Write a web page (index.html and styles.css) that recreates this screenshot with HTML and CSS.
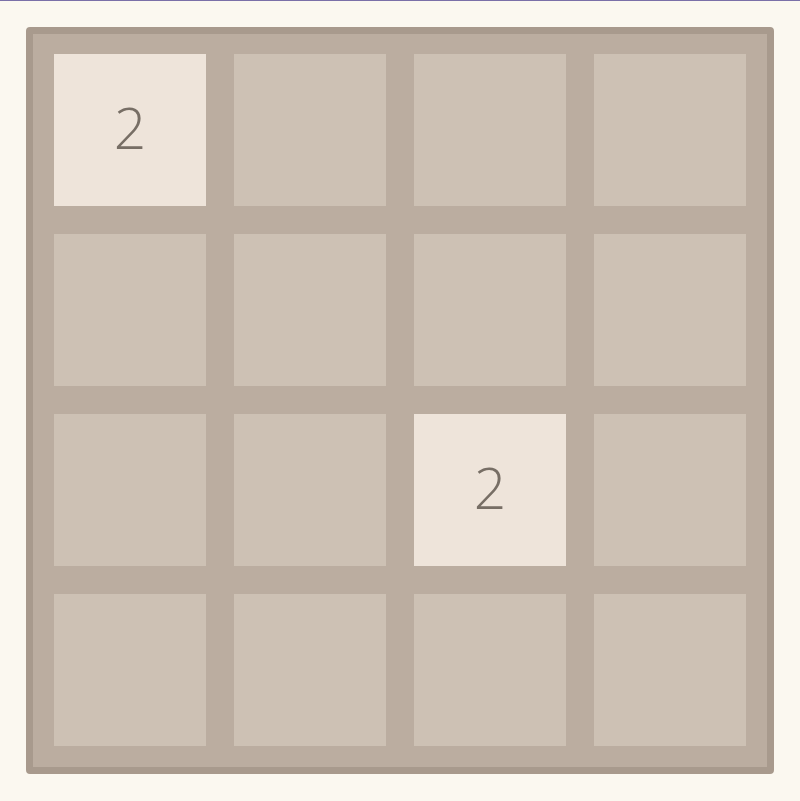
FILE: index.html
```html
<!DOCTYPE html>
<html>
	<head>
		<title>2048</title>
		<link rel="stylesheet" href="styles.css">
	</head>
	<body>
		<div class="board">
			<div class="cell tile-2">2</div>
			<div class="cell"></div>
			<div class="cell"></div>
			<div class="cell"></div>

			<div class="cell"></div>
			<div class="cell"></div>
			<div class="cell"></div>
			<div class="cell"></div>

			<div class="cell"></div>
			<div class="cell"></div>
			<div class="cell tile-2">2</div>
			<div class="cell"></div>

			<div class="cell"></div>
			<div class="cell"></div>
			<div class="cell"></div>
			<div class="cell"></div>
		</div>
	</body>
</html>
```

FILE: styles.css
```css
html {
	border-top: 1px solid #7a70a8;
}

body {
	margin: 0;
	padding: 26px 26px 0 26px;
	background: #fbf8f0;
	font-family: "Open Sans", sans-serif;
}

.board {
	width: 692px;
	display: grid;
	grid-template-columns: repeat(4, 152px);
	grid-auto-rows: 152px;
	gap: 28px;
	padding: 20px 21px 21px 21px;
	background: #bbada0;
	border: 7px solid #a89a8d;
	border-radius: 4px;
}

.cell {
	background: #cdc1b4;
	display: flex;
	align-items: center;
	justify-content: center;
}

.tile-2 {
	background: #eee4da;
	color: #776e65;
	font-size: 57px;
	font-weight: 300;
	padding-bottom: 6px;
	box-sizing: border-box;
}
```
